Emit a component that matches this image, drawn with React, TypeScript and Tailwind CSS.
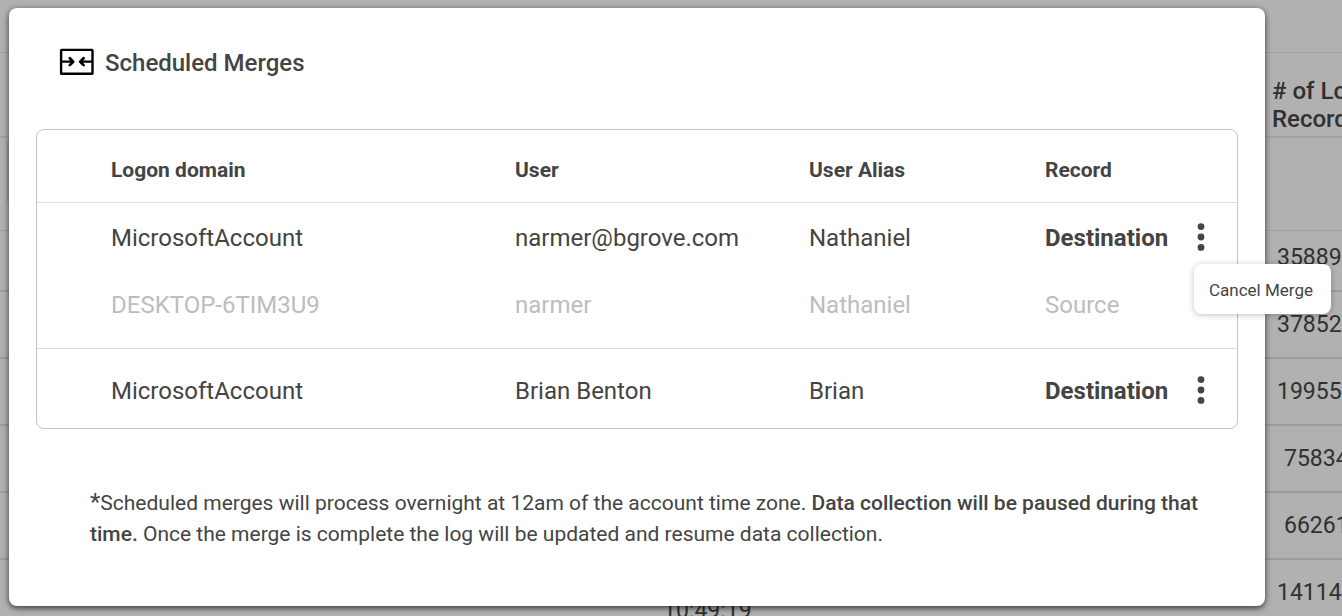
import React, { useState } from 'react';

interface MergeRecord {
    domain: string;
    user: string;
    alias: string;
    record: 'Destination' | 'Source';
}

interface Merge {
    id: number;
    records: MergeRecord[];
}

const merges: Merge[] = [
    {
        id: 1,
        records: [
            { domain: 'MicrosoftAccount', user: 'narmer@bgrove.com', alias: 'Nathaniel', record: 'Destination' },
            { domain: 'DESKTOP-6TIM3U9', user: 'narmer', alias: 'Nathaniel', record: 'Source' },
        ],
    },
    {
        id: 2,
        records: [
            { domain: 'MicrosoftAccount', user: 'Brian Benton', alias: 'Brian', record: 'Destination' },
        ],
    },
];

const logCounts = ['37852', '19955', '75834', '66261', '14114'];

const MergeIcon = () => (
    <svg className="h-[27px] w-[35px]" viewBox="0 0 35 27" fill="none" stroke="#000" aria-hidden="true">
        <rect x="2.1" y="1.9" width="31.4" height="23.8" rx="0.5" strokeWidth="2.4" />
        <path d="M2 13.7h12M33 13.7H21" strokeWidth="2.3" />
        <path d="M10.8 10.3l3.4 3.4-3.4 3.4M24.6 10.3l-3.4 3.4 3.4 3.4" strokeWidth="2.7" strokeLinecap="round" strokeLinejoin="round" />
    </svg>
);

const DotsIcon = () => (
    <svg className="h-7 w-2" viewBox="0 0 8 28" fill="#444" aria-hidden="true">
        <circle cx="4" cy="3.6" r="3.4" />
        <circle cx="4" cy="14" r="3.4" />
        <circle cx="4" cy="24.4" r="3.4" />
    </svg>
);

// Users table that sits dimmed behind the dialog
const LogTable = () => (
    <div className="h-screen overflow-hidden bg-[#b1b1b1] text-[23px] leading-7 text-[#303030]">
        <div className="h-[53px] border-b border-[#a0a0a0]" />
        <table className="w-full table-fixed border-collapse">
            <thead>
                <tr className="h-[84px] border-b-2 border-[#a3a3a3]">
                    <th className="w-[663px]" />
                    <th />
                    <th className="w-[70px] pt-5 text-left text-2xl leading-7 font-medium">
                        <span className="block whitespace-nowrap"># of Log</span>
                        <span className="block whitespace-nowrap">Records</span>
                    </th>
                </tr>
            </thead>
            <tbody>
                <tr className="h-[93px] border-b border-[#a0a0a0]">
                    <td className="pt-1 pl-[7px] align-top">
                        <input
                            aria-label="Filter"
                            className="block h-[60px] w-60 border border-[#9c9c9c] bg-[#a9a9a9]"
                        />
                    </td>
                    <td />
                    <td />
                </tr>
                <tr className="h-[61px] border-b-2 border-[#9c9c9c]">
                    <td />
                    <td />
                    <td className="pb-1 pl-[5px]">35889</td>
                </tr>
                {logCounts.map((count, index) => (
                    <tr key={count} className="h-[67px] border-b-2 border-[#9c9c9c]">
                        <td />
                        <td className="align-bottom">{index === 4 && '10:49:19'}</td>
                        <td className={index === 2 || index === 3 ? 'pl-3' : 'pl-[5px]'}>{count}</td>
                    </tr>
                ))}
            </tbody>
        </table>
    </div>
);

const App = () => {
    const [openMenu, setOpenMenu] = useState<number | null>(1);

    return (
        <div className="relative overflow-hidden font-['Roboto',sans-serif]">
            <LogTable />
            <div className="absolute inset-0 pt-2 pr-[77px] pl-[9px]">
                <div
                    role="dialog"
                    aria-labelledby="merges-title"
                    className="rounded-lg bg-white px-[27px] pt-10 pb-14 text-[#444] shadow-[0_2px_6px_rgba(0,0,0,0.7)]"
                >
                    <div className="flex items-start gap-[11px] pl-[23px]">
                        <MergeIcon />
                        <h1 id="merges-title" className="text-2xl leading-[30px] font-medium">Scheduled Merges</h1>
                    </div>

                    <div className="mt-[51px] rounded-lg border border-[#c4c4c4]">
                        <table className="w-full table-fixed border-collapse text-left text-2xl text-[#444]">
                            <thead>
                                <tr className="h-[72px] text-[21px]">
                                    <th className="pt-2 pl-[74px] font-bold">Logon domain</th>
                                    <th className="w-[294px] pt-2 font-bold">User</th>
                                    <th className="w-[236px] pt-2 font-bold">User Alias</th>
                                    <th className="w-[144px] pt-2 font-bold">Record</th>
                                    <th className="w-12" />
                                </tr>
                            </thead>
                            {merges.map((merge) => (
                                <tbody key={merge.id} className="border-t border-[#dedede]">
                                    {merge.records.map((row) => {
                                        const isSource = row.record === 'Source';
                                        const hasSource = merge.records.length > 1;
                                        const pad = isSource ? 'pb-[6px]' : hasSource ? 'pt-1' : 'pt-[6px]';
                                        return (
                                            <tr
                                                key={row.domain}
                                                className={isSource ? 'h-[79px] text-[#bdbdbd]' : hasSource ? 'h-[67px]' : 'h-[80px]'}
                                            >
                                                <td className={`${pad} pl-[74px]`}>{row.domain}</td>
                                                <td className={pad}>{row.user}</td>
                                                <td className={pad}>{row.alias}</td>
                                                <td className={isSource ? pad : `${pad} font-bold`}>{row.record}</td>
                                                <td className={hasSource ? 'pt-[2px]' : 'pt-1'}>
                                                    {!isSource && (
                                                        <div className="relative">
                                                            <button
                                                                type="button"
                                                                aria-label="Merge options"
                                                                className="flex w-6 justify-center"
                                                                onClick={() => setOpenMenu(openMenu === merge.id ? null : merge.id)}
                                                            >
                                                                <DotsIcon />
                                                            </button>
                                                            {openMenu === merge.id && (
                                                                <button
                                                                    type="button"
                                                                    className="absolute top-[41px] left-[5px] h-[50px] rounded-lg bg-white pt-[3px] pr-[18px] pl-[15px] text-[17px] whitespace-nowrap shadow-[0_1px_6px_rgba(0,0,0,0.25)]"
                                                                >
                                                                    Cancel Merge
                                                                </button>
                                                            )}
                                                        </div>
                                                    )}
                                                </td>
                                            </tr>
                                        );
                                    })}
                                </tbody>
                            ))}
                        </table>
                    </div>

                    <p className="mt-[59px] pr-8 pl-[54px] text-[21px] leading-[31px]">
                        <span className="text-2xl leading-none">*</span>
                        Scheduled merges will process overnight at 12am of the account time zone.{' '}
                        <strong className="font-medium">Data collection will be paused during that time.</strong> Once the
                        merge is complete the log will be updated and resume data collection.
                    </p>
                </div>
            </div>
        </div>
    );
};

export default App;
